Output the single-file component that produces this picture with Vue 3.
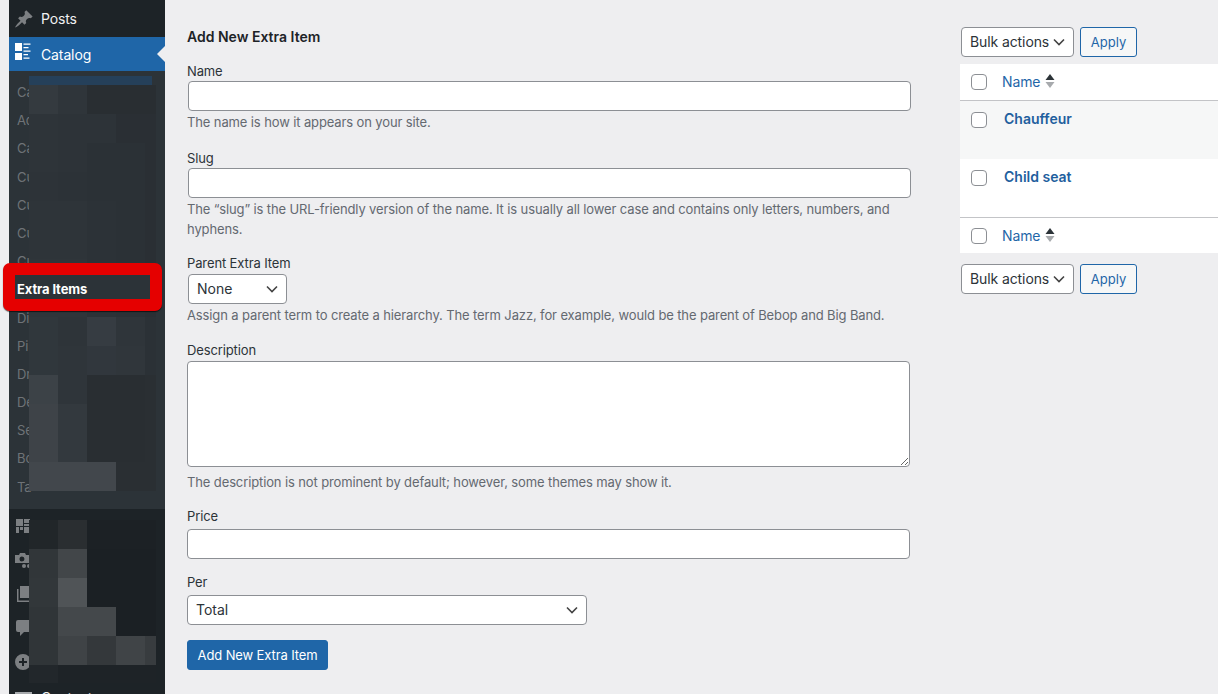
<script setup>
const subItems = ['Ca', 'Ad', 'Ca', 'Cu', 'Cu', 'Cu', 'Cu', 'Extra Items', 'Di', 'Pi', 'Dr', 'De', 'Se', 'Bo', 'Ta']

// blurred-out part of the menu, one row per 29px block
const topMosaic = [
  ['#343a3f', '#2f353a', '#292e32', '#292e32', '#292e32'],
  ['#2e3439', '#2d3338', '#2d3338', '#2a2f34', '#2a2f34'],
  ['#2e3439', '#2d3338', '#2b3136', '#2b3136', '#2a2f34'],
  ['#2d3338', '#2c3237', '#2b3136', '#2b3136', '#2a2f34'],
  ['#2e3439', '#2e3439', '#2c3237', '#2b3136', '#2a2f34'],
  ['#2e3439', '#2e3439', '#2c3237', '#2b3136', '#2a2f34'],
  ['#2f353a', '#2f353a', '#2c3237', '#2b3136', '#2a2f34'],
  ['#2f353a', '#2f353a', '#2c3237', '#2b3136', '#2a2f34'],
  ['#30373c', '#2e3439', '#363c42', '#2f353a', '#2b3136'],
  ['#30373c', '#2f353a', '#31373d', '#30363b', '#2b3136'],
  ['#3c4247', '#2f353a', '#292e32', '#292e32', '#2a2f33'],
  ['#3e4348', '#33393e', '#292e32', '#292e32', '#2a2f33'],
  ['#3e4348', '#33393e', '#292e32', '#292e32', '#2a2f33'],
  ['#42474c', '#42474c', '#42474c', '#2a2f33', '#2a2f33']
]

const bottomMosaic = [
  ['#212629', '#2a2e31', '#1c2125', '#1c2125', '#1c2125'],
  ['#313639', '#424649', '#1b2024', '#1b2024', '#1b2024'],
  ['#32373a', '#505457', '#1b2024', '#1b2024', '#1b2024'],
  ['#303538', '#44484b', '#44484b', '#1b2024', '#1b2024'],
  ['#303538', '#3f4346', '#34383b', '#404447', '#383c3f'],
  ['#22272b', '#1e2327', '#1e2327', '#1e2327', '#1e2327']
]

const terms = [
  { name: 'Chauffeur', alt: true },
  { name: 'Child seat', alt: false }
]
</script>

<template>
  <div class="page">
    <aside class="sidebar">
      <div class="menu-row">
        <svg class="menu-icon" viewBox="0 0 20 20"><path d="M10.44 3.02l1.82-1.82 6.36 6.35-1.83 1.82c-1.05-.68-2.48-.57-3.41.36l-.75.75c-.92.93-1.04 2.35-.35 3.41l-1.83 1.82-2.41-2.41-2.8 2.79c-.42.42-3.38 2.71-3.8 2.29s1.86-3.39 2.28-3.81l2.79-2.79L4.1 9.36l1.83-1.82c1.05.69 2.48.57 3.4-.36l.75-.75c.93-.92 1.05-2.35.36-3.41z" /></svg>
        <span>Posts</span>
      </div>
      <div class="menu-row current">
        <svg class="menu-icon" viewBox="0 0 20 20">
          <rect x="1" y="1" width="7" height="8" />
          <rect x="1" y="11" width="7" height="7" />
          <path d="M9.5 1.5h7v1.3h-7zM9.5 5h5v1.3h-5zM9.5 8.5h7v1.3h-7zM9.5 12h4.5v1.3H9.5zM9.5 15.5h6v1.3h-6z" />
        </svg>
        <span>Catalog</span>
        <i class="current-arrow"></i>
      </div>

      <ul class="submenu">
        <li v-for="(item, i) in subItems" :key="i" :class="{ marked: item === 'Extra Items' }">{{ item }}</li>
      </ul>

      <div class="menu-row dim">
        <svg class="menu-icon" viewBox="0 0 20 20"><path d="M2 3h7v7H2zM10 3h6v4h-6zM10 8h6v2h-6zM2 11h3v6H2zM6 11h3v3H6zM10 11h6v6h-6z" /></svg>
      </div>
      <div class="menu-row dim">
        <svg class="menu-icon" viewBox="0 0 20 20"><path d="M6 3h5l1 2h3v8H1V5h4z M8 6.5a2.5 2.5 0 1 0 0 5a2.5 2.5 0 0 0 0-5z" fill-rule="evenodd" /><circle cx="10" cy="16" r="2" /><circle cx="15" cy="16" r="2" /></svg>
      </div>
      <div class="menu-row dim">
        <svg class="menu-icon" viewBox="0 0 20 20"><path d="M6 2h12v12H6z" /><path d="M3 5h1.5v11.5H15V18H3z" /></svg>
      </div>
      <div class="menu-row dim">
        <svg class="menu-icon" viewBox="0 0 20 20"><path d="M4 2h11a2 2 0 0 1 2 2v8a2 2 0 0 1-2 2h-5l-4 4v-4H4a2 2 0 0 1-2-2V4a2 2 0 0 1 2-2z" /></svg>
      </div>
      <div class="menu-row dim">
        <svg class="menu-icon" viewBox="0 0 20 20"><path d="M9 2a8 8 0 1 0 0 16a8 8 0 0 0 0-16zM8 6h2v3h3v2h-3v3H8v-3H5V9h3z" fill-rule="evenodd" /></svg>
      </div>
      <div class="menu-row last">
        <svg class="menu-icon" viewBox="0 0 20 20"><path d="M1 4h17v12H1z" /></svg>
        <span>Contact</span>
      </div>

      <div class="blur-strip top-strip"></div>
      <div class="mosaic top-mosaic">
        <template v-for="(row, r) in topMosaic" :key="r">
          <i v-for="(color, c) in row" :key="c" :style="{ background: color }"></i>
        </template>
      </div>
      <div class="mosaic bottom-mosaic">
        <template v-for="(row, r) in bottomMosaic" :key="r">
          <i v-for="(color, c) in row" :key="c" :style="{ background: color }"></i>
        </template>
      </div>
    </aside>

    <main class="content">
      <form class="term-form" @submit.prevent>
        <h2>Add New Extra Item</h2>

        <div class="field name-field">
          <label>Name</label>
          <input class="inset" type="text" />
          <p>The name is how it appears on your site.</p>
        </div>

        <div class="field slug-field">
          <label>Slug</label>
          <input class="inset" type="text" />
          <p>The “slug” is the URL-friendly version of the name. It is usually all lower case and contains only letters, numbers, and hyphens.</p>
        </div>

        <div class="field parent-field">
          <label>Parent Extra Item</label>
          <select class="inset parent-select"><option>None</option></select>
          <p>Assign a parent term to create a hierarchy. The term Jazz, for example, would be the parent of Bebop and Big Band.</p>
        </div>

        <div class="field desc-field">
          <label>Description</label>
          <textarea></textarea>
          <p>The description is not prominent by default; however, some themes may show it.</p>
        </div>

        <div class="field price-field">
          <label>Price</label>
          <input type="text" />
        </div>

        <div class="field per-field">
          <label>Per</label>
          <select class="per-select"><option>Total</option></select>
        </div>

        <button class="primary" type="submit">Add New Extra Item</button>
      </form>

      <section class="terms">
        <div class="bulk">
          <select class="bulk-select"><option>Bulk actions</option></select>
          <button class="apply" type="button">Apply</button>
        </div>

        <div class="table">
          <div class="head-row">
            <input class="check" type="checkbox" />
            <a class="sort-link">Name</a>
            <svg class="sort" viewBox="0 0 10 14"><path class="up" d="M5 0l4.5 6h-9z" /><path class="down" d="M.5 8h9L5 14z" /></svg>
          </div>
          <div v-for="term in terms" :key="term.name" class="term-row" :class="{ alt: term.alt }">
            <input class="check" type="checkbox" />
            <a class="term-name">{{ term.name }}</a>
          </div>
          <div class="head-row foot">
            <input class="check" type="checkbox" />
            <a class="sort-link">Name</a>
            <svg class="sort" viewBox="0 0 10 14"><path class="up" d="M5 0l4.5 6h-9z" /><path class="down" d="M.5 8h9L5 14z" /></svg>
          </div>
        </div>

        <div class="bulk bottom">
          <select class="bulk-select"><option>Bulk actions</option></select>
          <button class="apply" type="button">Apply</button>
        </div>
      </section>
    </main>
  </div>
</template>

<style>
html,
body {
  margin: 0;
  background: #eeeef0;
}
</style>

<style scoped>
.page {
  display: flex;
  height: 694px;
  overflow: hidden;
  padding-left: 9px;
  box-sizing: border-box;
  background: #eeeef0;
  font-family: Inter, "Liberation Sans", sans-serif;
  font-size: 13px;
  letter-spacing: -0.12px;
  color: #2c3338;
}

.sidebar {
  position: relative;
  flex: 0 0 156px;
  background: #1d2327;
  color: #f0f0f1;
  font-size: 14px;
}

.menu-row {
  position: relative;
  display: flex;
  align-items: center;
  gap: 7px;
  height: 34px;
  padding-left: 5px;
}

.menu-row:first-child {
  height: 37px;
}

.menu-row.last {
  padding-top: 2px;
}

.menu-icon {
  flex: none;
  width: 20px;
  height: 20px;
  fill: #a7aaad;
}

.menu-row.dim .menu-icon,
.menu-row:first-child .menu-icon {
  fill: #7c7f82;
}

.menu-row.current {
  background: #1f66a8;
  color: #fff;
}

.menu-row.current .menu-icon {
  fill: #fff;
  margin-top: -4px;
}

.current-arrow {
  position: absolute;
  right: 0;
  top: 9px;
  border: 8px solid transparent;
  border-right-color: #eeeef0;
  border-left-width: 0;
}

.submenu {
  margin: 0;
  padding: 7px 0 8px;
  list-style: none;
  background: #2c3338;
  color: #6f7377;
  font-size: 13px;
}

.submenu li {
  height: 28.2px;
  line-height: 28.2px;
  padding-left: 8px;
}

.submenu li.marked {
  position: relative;
  z-index: 3;
  color: #fff;
  font-weight: 700;
}

.submenu li.marked::before {
  content: "";
  position: absolute;
  z-index: -1;
  left: -6px;
  top: -12px;
  width: 159px;
  height: 48px;
  box-sizing: border-box;
  border: 12px solid #e50000;
  border-radius: 7px;
  background: #2c3338;
  box-shadow: 0 1px 1px rgba(0, 0, 0, 0.6);
}

.blur-strip {
  position: absolute;
  left: 20px;
  top: 76px;
  width: 123px;
  height: 9px;
  background: #25405a;
}

.mosaic {
  position: absolute;
  left: 20px;
  z-index: 2;
  display: grid;
  grid-template-columns: 29px 29px 29px 29px 11px;
  grid-auto-rows: 29px;
}

.mosaic i {
  display: block;
}

.top-mosaic {
  top: 85px;
}

.bottom-mosaic {
  top: 520px;
  grid-template-rows: repeat(5, 29px) 18px;
}

.content {
  flex: 1;
  display: flex;
  min-width: 0;
  padding-left: 22px;
}

.term-form {
  flex: 0 0 724px;
  padding-top: 28px;
}

h2 {
  margin: 0 0 17px;
  font-size: 14px;
  line-height: 18px;
  font-weight: 600;
  letter-spacing: 0;
  color: #1d2327;
}

.field label {
  display: block;
  height: 16px;
  line-height: 16px;
  color: #2c3338;
}

.field p {
  margin: 0;
  line-height: 20px;
  color: #646970;
}

.field input[type="text"],
.field select,
textarea {
  display: block;
  box-sizing: border-box;
  background-color: #fff;
  border: 1px solid #8c8f94;
  border-radius: 4px;
  font-family: inherit;
  font-size: 14px;
  color: #2c3338;
}

.field input[type="text"] {
  width: 723px;
  height: 30px;
}

.inset {
  margin-left: 1px;
}

select {
  appearance: none;
  padding: 0 24px 1px 8px;
  height: 30px;
  background-image: url("data:image/svg+xml,%3Csvg xmlns='http://www.w3.org/2000/svg' width='20' height='20' viewBox='0 0 20 20'%3E%3Cpath d='M5 7.5l5 5 5-5' fill='none' stroke='%23444' stroke-width='1.6'/%3E%3C/svg%3E");
  background-repeat: no-repeat;
  background-position: right 4px top 50%;
  background-size: 20px 20px;
}

.name-field {
  margin-bottom: 18px;
}

.name-field label,
.slug-field label,
.desc-field label {
  margin-bottom: 2px;
}

.parent-field label {
  margin-bottom: 3px;
}

.name-field p,
.slug-field p,
.parent-field p {
  margin-top: 1px;
}

.slug-field {
  margin-bottom: 16px;
}

.parent-field {
  margin-bottom: 17px;
}

.parent-select {
  width: 99px;
}

textarea {
  display: block;
  width: 723px;
  height: 106px;
  resize: both;
  margin-top: 3px;
}

.desc-field p {
  margin-top: 5px;
}

.desc-field {
  margin-bottom: 16px;
}

.price-field label,
.per-field label {
  margin-bottom: 5px;
}

.price-field {
  margin-bottom: 15px;
}

.per-select {
  width: 400px;
}

.primary {
  display: block;
  margin-top: 15px;
  width: 141px;
  height: 30px;
  padding: 0;
  background: #1f66a8;
  border: 1px solid #1f66a8;
  border-radius: 3px;
  color: #fff;
  font-family: inherit;
  font-size: 13px;
  letter-spacing: -0.12px;
}

.terms {
  flex: 1;
  min-width: 0;
  margin-left: 49px;
  padding-top: 27px;
}

.bulk {
  display: flex;
  gap: 6px;
  padding-left: 1px;
}

.bulk.bottom {
  margin-top: 11px;
}

.bulk-select {
  width: 113px;
  background-color: #fff;
  border: 1px solid #8c8f94;
  border-radius: 4px;
  font-family: inherit;
  font-size: 14px;
  letter-spacing: -0.1px;
  color: #2c3338;
}

.apply {
  width: 57px;
  height: 30px;
  padding: 0;
  background: #f6f7f7;
  border: 1px solid #1f66a8;
  border-radius: 3px;
  color: #1f66a8;
  font-family: inherit;
  font-size: 13px;
}

.table {
  margin-top: 7px;
  background: #fff;
}

.head-row {
  display: flex;
  align-items: center;
  height: 36px;
  padding-left: 11px;
  border-bottom: 1px solid #c3c4c7;
}

.head-row .sort-link {
  margin-top: -2px;
}

.head-row.foot {
  border-top: 1px solid #c3c4c7;
  border-bottom: 0;
  height: 36px;
  box-sizing: border-box;
}

.head-row.foot .sort-link {
  margin-top: 0;
}

.check {
  appearance: none;
  flex: none;
  width: 16px;
  height: 16px;
  margin: 0;
  background: #fff;
  border: 1px solid #8c8f94;
  border-radius: 4px;
}

.sort-link {
  margin-left: 15px;
  font-size: 14px;
  color: #1f66a8;
}

.sort {
  width: 10px;
  height: 14px;
  margin-left: 5px;
  margin-top: -2px;
}

.sort .up {
  fill: #2c3338;
}

.sort .down {
  fill: #a7aaad;
}

.term-row {
  display: flex;
  align-items: flex-start;
  height: 58px;
  padding: 11px 0 0 11px;
  box-sizing: border-box;
}

.term-row.alt {
  background: #f6f7f7;
}

.term-name {
  margin-left: 17px;
  margin-top: -1px;
  font-size: 14px;
  line-height: 16px;
  font-weight: 600;
  letter-spacing: 0;
  color: #1f5f9e;
}
</style>
